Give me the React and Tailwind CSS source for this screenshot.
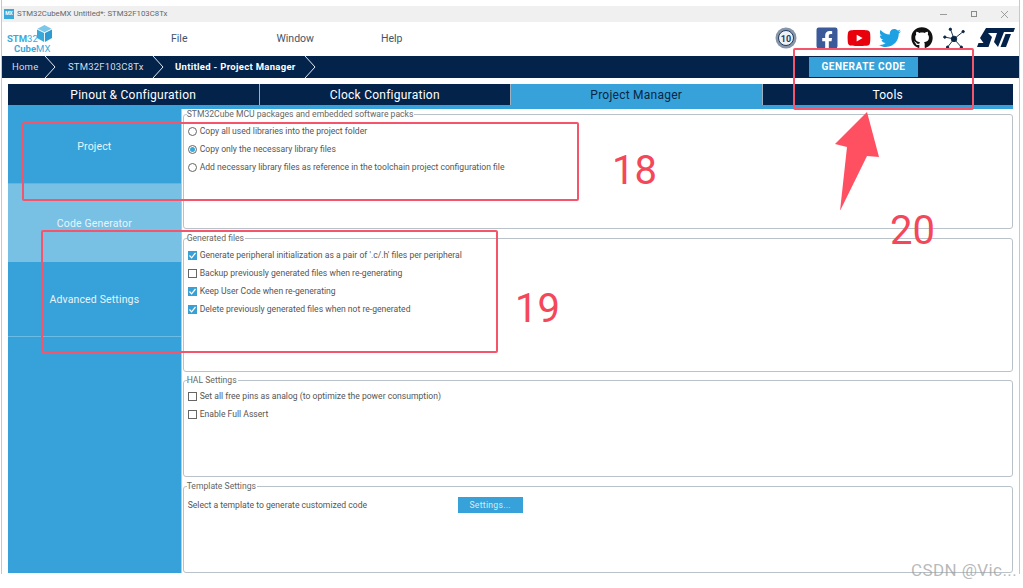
import React from "react";
import { FaFacebookSquare, FaYoutube, FaTwitter, FaGithub } from "react-icons/fa";

const font = { fontFamily: 'Roboto, "Liberation Sans", Arial, sans-serif' };

const Chevron = () => (
	<svg width="12" height="22" viewBox="0 0 12 22" className="shrink-0">
		<path d="M1 0 L11 11 L1 22" fill="none" stroke="#e6ebf0" strokeWidth="1" />
	</svg>
);

const CubeLogo = () => (
	<div className="w-[50px] h-[32px] relative shrink-0">
		<div className="absolute left-0 top-[11px] text-[9.5px] leading-[10px] font-bold text-[#39a9dc]">
			STM<span className="font-normal">32</span>
		</div>
		<div className="absolute left-[7px] top-[21px] text-[9.5px] leading-[10px] font-bold text-[#39a9dc]">
			Cube<span className="font-normal">MX</span>
		</div>
		<svg width="15" height="17" viewBox="0 0 17 19" className="absolute left-[30px] top-[2px]">
			<path d="M8.5 0 L16.5 4 L8.5 8 L0.5 4 Z" fill="#7cc6ea" />
			<path d="M0 5 L8 9 L8 19 L0 14.5 Z" fill="#39a9dc" />
			<path d="M17 5 L9 9 L9 19 L17 14.5 Z" fill="#2d9ad2" />
		</svg>
	</div>
);

const Badge = () => (
	<svg width="22" height="22" viewBox="0 0 22 22">
		<circle cx="11" cy="11" r="10.5" fill="#8795a8" />
		<circle cx="11" cy="11" r="7.5" fill="#eef1f5" stroke="#1f3a63" strokeWidth="1" />
		<text x="11" y="14.5" textAnchor="middle" fontSize="9" fontWeight="700" fill="#1f3a63" style={font}>
			10
		</text>
	</svg>
);

const HubIcon = () => (
	<svg width="22" height="22" viewBox="0 0 24 24" stroke="#0b2545" strokeWidth="1" fill="#0b2545">
		<path d="M12 13 L8 2 M12 13 L22 5 M12 13 L2 11 M12 13 L5 22 M12 13 L20 22" />
		<circle cx="12" cy="13" r="3" />
		<circle cx="8" cy="2.5" r="1.3" />
		<circle cx="22" cy="5" r="1.3" />
		<circle cx="2" cy="11" r="1.3" />
		<circle cx="5" cy="22" r="1.3" />
		<circle cx="20" cy="22" r="1.3" />
	</svg>
);

const StLogo = () => (
	<svg width="38" height="20" viewBox="0 0 38 20">
		<path d="M9 0 H38 L36.5 4 H27 L21 19 L17 14 L20 5 H11 L15 9 L11.5 19 H0 L1.5 15 H6.5 L3 10 Z" fill="#03234b" />
		<path d="M28.5 6 H34 L29 19 H23.5 Z" fill="#03234b" />
	</svg>
);

const Radio = ({ checked }) => (
	<span className="w-[9px] h-[9px] rounded-full border border-[#666666] bg-white flex items-center justify-center shrink-0">
		{checked && <span className="w-[5px] h-[5px] rounded-full bg-[#39a9dc]" />}
	</span>
);

const Check = ({ checked }) =>
	checked ? (
		<span className="w-[9px] h-[9px] bg-[#39a0d6] flex items-center justify-center shrink-0">
			<svg width="9" height="9" viewBox="0 0 9 9">
				<path d="M1.5 4.5 L3.6 6.8 L7.5 2" fill="none" stroke="#ffffff" strokeWidth="1.2" />
			</svg>
		</span>
	) : (
		<span className="w-[9px] h-[9px] border border-[#666666] bg-white shrink-0" />
	);

const Option = ({ children, control }) => (
	<div className="flex items-center gap-[3px] h-[18px] text-[8.6px] text-[#555555] whitespace-nowrap">
		{control}
		<span>{children}</span>
	</div>
);

const Panel = ({ title, className, children }) => (
	<fieldset className={`border border-[#b9c2c9] rounded-[3px] pl-[4px] pt-0 ${className}`}>
		<legend className="-ml-[1px] pr-[1px] text-[8.6px] leading-[10px] text-[#666666]">{title}</legend>
		{children}
	</fieldset>
);

const Tab = ({ children, active }) => (
	<div
		className={`flex-1 flex items-center justify-center text-[12px] tracking-[0.25px] border-r border-[#9fb0c0] last:border-r-0 ${
			active ? "bg-[#36a2d9] text-[#0b2545]" : "text-white"
		}`}
	>
		{children}
	</div>
);

const SideItem = ({ children, className }) => (
	<div className={`flex items-center justify-center text-[10.5px] tracking-[0.15px] text-[#e8f4fb] ${className}`}>
		{children}
	</div>
);

export default function App() {
	return (
		<div className="relative w-[1023px] h-[588px] bg-white overflow-hidden" style={font}>
			<div className="ml-[1px] mr-[3px] pt-[6px] h-[574px] border-x border-[#c8c8c8]">
				{/* Title bar */}
				<div className="h-[16px] bg-[#f0f0f0] flex items-center pl-[2px] text-[7.8px] text-[#666666]">
					<span className="w-[10px] h-[10px] bg-[#39a9dc] text-white text-[5px] font-bold flex items-center justify-center mr-[3px]">
						MX
					</span>
					<span>STM32CubeMX Untitled*: STM32F103C8Tx</span>
					<div className="ml-auto flex items-center gap-[24px] pr-[11px] text-[#9a9a9a]">
						<span className="w-[7px] h-px bg-[#9a9a9a]" />
						<span className="w-[6px] h-[6px] border border-[#8a8a8a]" />
						<svg width="7" height="7" viewBox="0 0 7 7">
							<path d="M0 0 L7 7 M7 0 L0 7" stroke="#8a8a8a" strokeWidth="0.8" />
						</svg>
					</div>
				</div>

				{/* Menu row */}
				<div className="h-[34px] flex items-center pl-[5px] relative">
					<CubeLogo />
					<div className="flex text-[10.5px] text-[#44546a] ml-[114px] -mt-[1px]">
						<span>File</span>
						<span className="ml-[89px]">Window</span>
						<span className="ml-[67px]">Help</span>
					</div>
					<div className="ml-auto flex items-center mr-[4px] -mt-[2px]">
						<Badge />
						<FaFacebookSquare className="ml-[18px] text-[#3b5a9a] text-[24px]" />
						<FaYoutube className="ml-[8px] text-[#e8000d] text-[24px]" />
						<FaTwitter className="ml-[8px] text-[#1da1e2] text-[22px]" />
						<FaGithub className="ml-[10px] text-[#111111] text-[22px]" />
						<span className="ml-[10px]">
							<HubIcon />
						</span>
						<span className="ml-[12px]">
							<StLogo />
						</span>
					</div>
				</div>

				{/* Breadcrumb */}
				<div className="h-[22px] bg-[#03234b] flex items-center text-[9.5px] text-[#d5dce4] tracking-[0.2px]">
					<span className="w-[42px] pl-[10px]">Home</span>
					<Chevron />
					<span className="w-[96px] pl-[12px]">STM32F103C8Tx</span>
					<Chevron />
					<span className="w-[140px] pl-[11px] font-bold text-white whitespace-nowrap tracking-[0.3px]">Untitled - Project Manager</span>
					<Chevron />
					<button className="ml-[493px] w-[109px] h-[20px] -mt-[1px] bg-[#36a2d9] text-white text-[10px] font-bold tracking-[0.5px]">
						GENERATE CODE
					</button>
				</div>

				{/* Tabs */}
				<div className="mx-[6px] mt-[6px] h-[21px] bg-[#03234b] flex">
					<Tab>Pinout &amp; Configuration</Tab>
					<Tab>Clock Configuration</Tab>
					<Tab active>Project Manager</Tab>
					<Tab>Tools</Tab>
				</div>
				<div className="mx-[6px] h-[4px] bg-[#36a2d9]" />

				{/* Body */}
				<div className="mx-[6px] flex h-[464px]">
					<div className="w-[174px] flex flex-col bg-[#36a2d9] border-r border-[#9ed3ee]">
						<SideItem className="h-[75px] pt-[2px] bg-[#36a2d9] border-b border-[#5fb6e2]">Project</SideItem>
						<SideItem className="h-[78px] bg-[#79c0e5] pt-[2px]">Code Generator</SideItem>
						<SideItem className="h-[75px] pt-[2px] border-b border-[#6bbce5]">Advanced Settings</SideItem>
					</div>
					<div className="w-[832px] ml-[1px] flex flex-col">
						<Panel title="STM32Cube MCU packages and embedded software packs" className="h-[120px] shrink-0">
							<div className="pt-[3px]">
								<Option control={<Radio />}>Copy all used libraries into the project folder</Option>
								<Option control={<Radio checked />}>Copy only the necessary library files</Option>
								<Option control={<Radio />}>Add necessary library files as reference in the toolchain project configuration file</Option>
							</div>
						</Panel>
						<Panel title="Generated files" className="h-[139px] mt-[4px] shrink-0">
							<div className="pt-[3px]">
								<Option control={<Check checked />}>Generate peripheral initialization as a pair of '.c/.h' files per peripheral</Option>
								<Option control={<Check />}>Backup previously generated files when re-generating</Option>
								<Option control={<Check checked />}>Keep User Code when re-generating</Option>
								<Option control={<Check checked />}>Delete previously generated files when not re-generated</Option>
							</div>
						</Panel>
						<Panel title="HAL Settings" className="h-[102px] mt-[3px] shrink-0">
							<div className="pt-[2px]">
								<Option control={<Check />}>Set all free pins as analog (to optimize the power consumption)</Option>
								<Option control={<Check />}>Enable Full Assert</Option>
							</div>
						</Panel>
						<Panel title="Template Settings" className="h-[92px] mt-[4px] shrink-0">
							<div className="flex items-center pt-[6px] text-[8.6px] text-[#555555]">
								<span className="w-[270px]">Select a template to generate customized code</span>
								<button className="w-[65px] h-[16px] bg-[#36a2d9] text-[#d5ecf8] text-[8.6px] tracking-[0.3px]">Settings...</button>
							</div>
						</Panel>
					</div>
				</div>
			</div>

			{/* Annotations drawn on top of the screenshot */}
			<div className="absolute left-[22px] top-[122px] w-[557px] h-[79px] border-2 border-[#f4556a] rounded-[2px]" />
			<div className="absolute left-[41px] top-[230px] w-[457px] h-[123px] border-2 border-[#f4556a] rounded-[2px]" />
			<div className="absolute left-[793px] top-[48px] w-[181px] h-[62px] border-2 border-[#f4556a] rounded-[2px]" />
			<svg width="50" height="100" viewBox="0 0 50 100" className="absolute left-[832px] top-[110px]">
				<path d="M35 2 L3 34 L15 37 L8 101 L35 46 L47 47 Z" fill="#ff5062" />
			</svg>
			<span className="absolute left-[612px] top-[147px] text-[40px] leading-[48px] text-[#f4475a]">18</span>
			<span className="absolute left-[515px] top-[285px] text-[40px] leading-[48px] text-[#f4475a]">19</span>
			<span className="absolute left-[890px] top-[207px] text-[40px] leading-[48px] text-[#f4475a]">20</span>
			<span className="absolute left-[911px] top-[559px] text-[17px] leading-[22px] text-[#9a9a9a]/70 tracking-[0.4px] whitespace-nowrap">CSDN @Vic...</span>
		</div>
	);
}
